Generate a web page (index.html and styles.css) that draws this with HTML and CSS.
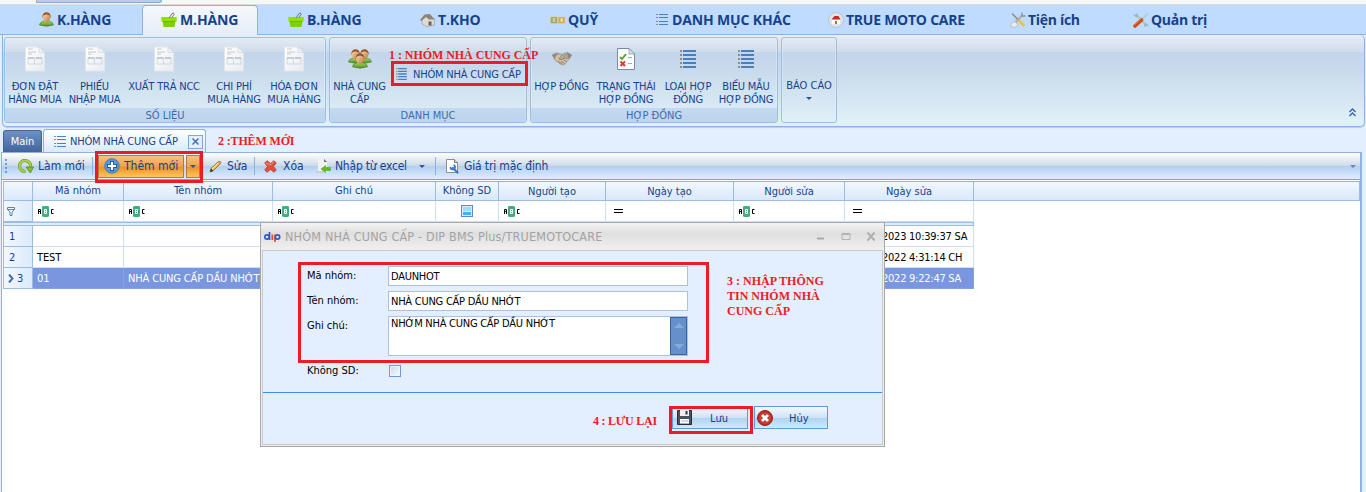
FILE: index.html
```
<!DOCTYPE html>
<html lang="vi">
<head>
<meta charset="utf-8">
<title>DIP BMS Plus/TRUEMOTOCARE</title>
<link rel="stylesheet" href="styles.css">
</head>
<body>
<svg class="defs" aria-hidden="true">
  <defs>
    <linearGradient id="gGreen" x1="0" y1="0" x2="0" y2="1"><stop offset="0" stop-color="#a5d860"/><stop offset="1" stop-color="#4d8f24"/></linearGradient>
    <linearGradient id="gHead" x1="0" y1="0" x2="1" y2="1"><stop offset="0" stop-color="#fbe0b8"/><stop offset="1" stop-color="#b9743a"/></linearGradient>
    <linearGradient id="gPage" x1="0" y1="0" x2="1" y2="1"><stop offset="0" stop-color="#ffffff"/><stop offset="1" stop-color="#e8ebef"/></linearGradient>
    <radialGradient id="gRed"><stop offset="0" stop-color="#ef7a66"/><stop offset="1" stop-color="#b82418"/></radialGradient>
    <radialGradient id="gBlue"><stop offset="0" stop-color="#7fb4ea"/><stop offset="1" stop-color="#4f8bcd"/></radialGradient>
    <symbol id="person" viewBox="0 0 15 15"><path d="M0.5 13C0.5 10.500 3 9.800 5.500 9H9.500C12 9.800 14.500 10.500 14.500 13Q7.500 15.500 .5 13Z" fill="url(#gGreen)" stroke="#4b8428" stroke-width=".6"/><path d="M3.500 4.500Q3.500 .5 7.500 .5T11.500 4.500Q10.500 10.500 7.500 11Q4.500 10.500 3.500 4.500Z" fill="url(#gHead)"/><path d="M3.500 6.500V3.500Q4.500 .2 7.500 .2T11.500 3.500V6.500L10.700 3.500Q9 2.500 7.500 2.500T4.300 3.500Z" fill="#96582a"/></symbol>
    <symbol id="people" viewBox="0 0 24 21"><use href="#person" x="0" y="0" width="15" height="16"/><use href="#person" x="9" y="0" width="15" height="16"/><use href="#person" x="4" y="4" width="16" height="17"/></symbol>
    <symbol id="basket" viewBox="0 0 16 16"><path d="M.3 5H15.700V9.500H.3Z" fill="#93e000"/><path d="M1.500 9H14.500L13.500 15H2.500Z" fill="#7fd000"/><path d="M2 9.500H14" stroke="#5fae00" stroke-width=".7"/><path d="M8 6 11 1.500Q13 0 13 2.500L11 5.500" fill="none" stroke="#6f7780" stroke-width="1"/></symbol>
    <symbol id="house" viewBox="0 0 16 14"><path d="M2 6 7 2 14.500 5.500V12L7 13.500 2 11Z" fill="#dedbd3" stroke="#8b8781" stroke-width=".5"/><path d="M0 7 4.500 1.500 10 1 14.500 6.500 9 6.500 6 4 1.500 8Z" fill="#8d857b"/><path d="M8.500 8.500H11.500V12.500H8.500Z" fill="#6b6256"/></symbol>
    <symbol id="money" viewBox="0 0 16 12"><path d="M0 2.500Q4 1.500 8 2.500T16 2V9.500Q12 10.500 8 10T0 10Z" fill="#d9d3a8"/><path d="M.8 3.200h6.400v6H.8Z" fill="#9fa872"/><path d="M2.800 4.200h2.400v3.800H2.800Z" fill="#d3cf9c"/><path d="M8.500 3.200h6v6h-6Z" fill="#cfa65c"/><path d="M10.500 4.200h2.200v3.800h-2.200Z" fill="#f0dda8"/></symbol>
    <symbol id="list" viewBox="0 0 12 11"><path d="M3 .5h9M3 3.500h9M3 7.500h9M3 10.500h9" stroke="#4a81bd" stroke-width="1"/><path d="M0 .5h2M0 3.500h2M0 7.500h2M0 10.500h2" stroke="#8c8c8c" stroke-width="1"/></symbol>
    <symbol id="biglist" viewBox="0 0 16 18"><path d="M3 1h13M3 5h13M3 9h13M3 13h13M3 17h13" stroke="#4a81bd" stroke-width="2"/><path d="M0 1h2M0 5h2M0 9h2M0 13h2M0 17h2" stroke="#8c8c8c" stroke-width="2"/></symbol>
    <symbol id="home" viewBox="0 0 16 16"><circle cx="8" cy="8" r="7.500" fill="#dfe4e8" stroke="#b3bcc4" stroke-width=".8"/><path d="M4 7.500h8v4.500H4Z" fill="#fff"/><path d="M3.500 7.500 6.500 4H10.500L12.500 7.500Z" fill="#cb2a20"/><path d="M7 9h2V12H7Z" fill="#b4695a"/></symbol>
    <symbol id="tools" viewBox="0 0 16 16"><path d="M6 6 14.500 14" stroke="#edc448" stroke-width="2.800"/><path d="M2 1.500 8 7.500" stroke="#848c92" stroke-width="1.500"/><path d="M12.500 3 5 11" stroke="#a9b1b7" stroke-width="2.200"/><path d="M1 11.500 5 9.500 8 13 4.500 15.500 1 14.500Z" fill="#eceef0" stroke="#a6adb4" stroke-width=".7"/><path d="M12 .5V4H15.500" fill="none" stroke="#8b949b" stroke-width="1.400"/></symbol>
    <symbol id="driver" viewBox="0 0 16 16"><path d="M4 3.500 13 13" stroke="#a6c8c9" stroke-width="2"/><path d="M1 2.500 3.500 4.500 4.500 1.500M11.500 14.500 13 12l2 2" fill="none" stroke="#8fb8b5" stroke-width="1.600"/><path d="M8 8 15 1.500" stroke="#b3cfc9" stroke-width="1.800"/><path d="M2 14 8.500 8" stroke="#d04c12" stroke-width="3.600" stroke-linecap="round"/><path d="M1.500 13 8 7" stroke="#ed8b46" stroke-width=".8"/></symbol>
    <symbol id="doc" viewBox="0 0 20 25"><path d="M.5.5H14L19.500 6V24.500H.5Z" fill="url(#gPage)" stroke="#e2e6ea"/><path d="M14 .5V6H19.500Z" fill="#f1f3f5" stroke="#cfd4da" stroke-width=".7"/><path d="M3 2.500h5M3 5.500h8M3 7.500h4" stroke="#c4c9cf"/><path d="M3 11.500h14v6H3ZM9.500 11.500v6" fill="none" stroke="#ccd5df" stroke-width=".9"/><path d="M3 11.500h6M11 11.500h6" stroke="#a3b2c2"/></symbol>
    <symbol id="hands" viewBox="0 0 20 16"><path d="M0 4 5 1.500 10 3 15 1 20 4 17 9 12 14.500 8 13.500 2 8.500Z" fill="#aaa195"/><path d="M3 5 8 3.500 11 5 8 8 12 7 17 9.500 14 12 12 13.500 8 12.500 3 8Z" fill="#d3bfa5"/><path d="M10 4 7 8 10 8.500 13 7M12 9l3 2M9 10l4 3M6 10l4 3" fill="none" stroke="#7d7163" stroke-width=".8"/><path d="M0 4 5 1.500 3 7.500ZM20 4 15 1l2 7Z" fill="#8b8680"/></symbol>
    <symbol id="check" viewBox="0 0 18 22"><path d="M.5.5H12L17.500 6V21.500H.5Z" fill="#fdfeff" stroke="#788ca5"/><path d="M12 .5V6H17.500Z" fill="#dce5ee" stroke="#788ca5" stroke-width=".7"/><path d="M3 9 5 11 9 6" fill="none" stroke="#62a729" stroke-width="2"/><path d="M3.500 13.500 8 18M8 13.500 3.500 18" stroke="#cc4238" stroke-width="2"/><path d="M11 9.500h4M11 15.500h4" stroke="#9ab0c8"/></symbol>
    <symbol id="refresh" viewBox="0 0 16 15"><path d="M12.500 8A5.500 5.500 0 1 0 7.500 12.500" fill="none" stroke="#67952a" stroke-width="3.200"/><path d="M12.500 8A5.500 5.500 0 1 0 7.500 12.500" fill="none" stroke="#a9d44d" stroke-width="2"/><path d="M8 8H15.700L12.300 14Z" fill="#86bd20" stroke="#558517" stroke-width=".7"/></symbol>
    <symbol id="add" viewBox="0 0 16 16"><circle cx="8" cy="8" r="7.300" fill="url(#gBlue)" stroke="#4c7fb9"/><path d="M8 3v10M3 8h10" stroke="#205795" stroke-width="4"/><path d="M8 4v8M4 8h8" stroke="#fff" stroke-width="2.200"/></symbol>
    <symbol id="pencil" viewBox="0 0 13 13"><path d="M1 12 2 8.500 9.500 1.500Q11.500 .5 12 3L4.500 10.500Z" fill="#efbd50" stroke="#87601d" stroke-width=".8"/><path d="M9.500 1.500Q11.500 .5 12 3L11 4 8.500 2.500Z" fill="#d98f7c"/><path d="M1 12 2 8.500 4.500 11Z" fill="#3d3b35"/><path d="M3 9 9 3" stroke="#fff0ac"/></symbol>
    <symbol id="cross" viewBox="0 0 13 13"><path d="M.7 3 3 .7 6.500 3.500 10 .7 12.300 3 9.500 6.500 12.300 10 10 12.300 6.500 9.500 3 12.300.7 10 3.500 6.500Z" fill="#e04f3e" stroke="#b23e36" stroke-width=".8"/><path d="M2 3 6 5 10 2" fill="none" stroke="#f49a88"/></symbol>
    <symbol id="excel" viewBox="0 0 16 16"><path d="M2 .5H8L11 4V14H2Z" fill="#eff1f2"/><path d="M8 1 11 4H8Z" fill="#6b7379"/><path d="M0 13h8v2H0Z" fill="#c8d0da"/><path d="M5 11 9.500 7.500V9.500H14.500V12.500H9.500V14.500Z" fill="#61bb24" stroke="#4ba01f" stroke-width=".5"/></symbol>
    <symbol id="wrench" viewBox="0 0 13 15"><path d="M.5.500H8.500L11.500 3.500V13.500H.5Z" fill="#fff" stroke="#8a8f94"/><path d="M8.500 .5V3.500H11.500" fill="#ddd" stroke="#777"/><path d="M7 9 11.500 13.500" stroke="#397ac0" stroke-width="2.300" stroke-linecap="round"/><path d="M4.500 8A2.300 2.300 0 1 0 7.500 6" fill="none" stroke="#397ac0" stroke-width="1.700"/></symbol>
    <symbol id="funnel" viewBox="0 0 8 9"><path d="M.5.500H7.500V2.500L5 5V8.500H3V5L.5 2.500ZM.5 2.500h7" fill="#f5f9ff" stroke="#5074a8" stroke-width=".9"/></symbol>
    <symbol id="floppy" viewBox="0 0 15 15"><path d="M.5.5H14.500V14.500H.5Z" fill="#4a5262" stroke="#252b37"/><path d="M3 0H12V6H3Z" fill="#eef1f4"/><path d="M8.500 1H10.500V4.500H8.500Z" fill="#303847"/><path d="M3 9H12V14H3Z" fill="#fff"/><path d="M3 13.500h9M4 11h7" stroke="#a9b4c0"/></symbol>
    <symbol id="cancel" viewBox="0 0 16 16"><circle cx="8" cy="8" r="7.500" fill="url(#gRed)" stroke="#92221b"/><path d="M5 5 11 11M11 5 5 11" stroke="#8e211a" stroke-width="4.300"/><path d="M5 5 11 11M11 5 5 11" stroke="#fff" stroke-width="3"/></symbol>
    <symbol id="dip" viewBox="0 0 17 10"><g fill="none" stroke-width="1.700"><circle cx="3" cy="5" r="2.200" stroke="#2d5bc4"/><path d="M5.500 0V8" stroke="#2d5bc4"/><path d="M8.300 2.500V8" stroke="#e34d2a"/><path d="M11 2.500V10" stroke="#e34d2a"/><circle cx="13.500" cy="5" r="2.200" stroke="#2d5bc4"/></g></symbol>
    <symbol id="collapse" viewBox="0 0 7 9"><path d="M.5 4 3.500 1 6.500 4M.5 8 3.500 5 6.500 8" fill="none" stroke="#2c63ae" stroke-width="1.300"/></symbol>
    <symbol id="abc" viewBox="0 0 16 11"><path d="M6 0H9Q11 0 11 1V10Q11 11 9 11H6Q4 11 4 10V1Q4 0 6 0Z" fill="#42ab80"/><g fill="none" stroke-width="1"><path d="M.5 8V3.500H2.500V8M1 5.500H2M15.500 3.500H13.500V7.500H15.500" stroke="#000"/><path d="M6.500 3.500H8.500V7.500H6.500ZM6.500 5.500H8.500" stroke="#fff"/></g></symbol>
  </defs>
</svg>

<div class="titlestrip"><div class="quickbar"></div></div>

<nav class="tabs">
  <div class="tab tab-kh"><svg width="15" height="15"><use href="#person"/></svg><span>K.HÀNG</span></div>
  <div class="tab tab-mh active"><svg width="16" height="16"><use href="#basket"/></svg><span>M.HÀNG</span></div>
  <div class="tab tab-bh"><svg width="16" height="16"><use href="#basket"/></svg><span>B.HÀNG</span></div>
  <div class="tab tab-kho"><svg width="16" height="14"><use href="#house"/></svg><span>T.KHO</span></div>
  <div class="tab tab-quy"><svg width="16" height="12"><use href="#money"/></svg><span>QUỸ</span></div>
  <div class="tab tab-dm"><svg width="12" height="11"><use href="#list"/></svg><span>DANH MỤC KHÁC</span></div>
  <div class="tab tab-moto"><svg width="16" height="16"><use href="#home"/></svg><span>TRUE MOTO CARE</span></div>
  <div class="tab tab-ti"><svg width="16" height="16"><use href="#tools"/></svg><span>Tiện ích</span></div>
  <div class="tab tab-qt"><svg width="16" height="16"><use href="#driver"/></svg><span>Quản trị</span></div>
</nav>

<section class="ribbon">
  <div class="group g-data">
    <div class="items">
      <div class="item w60"><svg width="20" height="25"><use href="#doc"/></svg><span>ĐƠN ĐẶT<br>HÀNG MUA</span></div>
      <div class="item w59"><svg width="20" height="25"><use href="#doc"/></svg><span>PHIẾU<br>NHẬP MUA</span></div>
      <div class="item w80"><svg width="20" height="25"><use href="#doc"/></svg><span>XUẤT TRẢ NCC</span></div>
      <div class="item w60"><svg width="20" height="25"><use href="#doc"/></svg><span>CHI PHÍ<br>MUA HÀNG</span></div>
      <div class="item w60"><svg width="20" height="25"><use href="#doc"/></svg><span>HÓA ĐƠN<br>MUA HÀNG</span></div>
    </div>
    <div class="caption">SỐ LIỆU</div>
  </div>
  <div class="group g-list">
    <div class="items">
      <div class="item w59"><svg width="24" height="21"><use href="#people"/></svg><span>NHÀ CUNG<br>CẤP</span></div>
      <div class="small-item"><svg width="11" height="12"><use href="#biglist"/></svg><span>NHÓM NHÀ CUNG CẤP</span></div>
    </div>
    <div class="caption">DANH MỤC</div>
  </div>
  <div class="group g-contract">
    <div class="items">
      <div class="item w61"><svg width="20" height="16"><use href="#hands"/></svg><span>HỢP ĐỒNG</span></div>
      <div class="item w68"><svg width="18" height="22"><use href="#check"/></svg><span>TRẠNG THÁI<br>HỢP ĐỒNG</span></div>
      <div class="item w56"><svg width="16" height="18"><use href="#biglist"/></svg><span>LOẠI HỢP<br>ĐỒNG</span></div>
      <div class="item w60"><svg width="16" height="18"><use href="#biglist"/></svg><span>BIỂU MẪU<br>HỢP ĐỒNG</span></div>
    </div>
    <div class="caption">HỢP ĐỒNG</div>
  </div>
  <div class="group g-report"><span>BÁO CÁO</span><i class="arrow"></i></div>
  <svg class="collapse" width="7" height="9"><use href="#collapse"/></svg>
</section>

<div class="doctabs">
  <div class="doctab-main">Main</div>
  <div class="doctab"><svg width="12" height="11"><use href="#list"/></svg><span>NHÓM NHÀ CUNG CẤP</span><b class="close"><svg width="7" height="7" viewBox="0 0 7 7"><path d="M.5.5 6.500 6.500M6.500.5.5 6.500" stroke="#3a64a4" stroke-width="1.300"/></svg></b></div>
</div>

<main class="workspace">
  <div class="toolbar">
    <i class="grip"></i>
    <div class="tool tl-refresh"><svg width="16" height="15"><use href="#refresh"/></svg><span>Làm mới</span></div>
    <i class="sep"></i>
    <div class="tool tl-add"><svg width="16" height="16"><use href="#add"/></svg><span>Thêm mới</span></div>
    <div class="tl-drop"><i class="arrow"></i></div>
    <div class="tool tl-edit"><svg width="13" height="13"><use href="#pencil"/></svg><span>Sửa</span></div>
    <i class="sep"></i>
    <div class="tool tl-del"><svg width="13" height="13"><use href="#cross"/></svg><span>Xóa</span></div>
    <div class="tool tl-excel"><svg width="16" height="16"><use href="#excel"/></svg><span>Nhập từ excel</span><i class="arrow"></i></div>
    <i class="sep"></i>
    <div class="tool tl-def"><svg width="13" height="15"><use href="#wrench"/></svg><span>Giá trị mặc định</span></div>
    <i class="arrow more"></i>
  </div>

  <div class="grid">
    <div class="row head"><div></div><div>Mã nhóm</div><div>Tên nhóm</div><div>Ghi chú</div><div>Không SD</div><div class="low">Người tạo</div><div class="low">Ngày tạo</div><div class="low">Người sửa</div><div class="low">Ngày sửa</div><div></div></div>
    <div class="row filter">
      <div class="ind"><svg width="8" height="9"><use href="#funnel"/></svg></div>
      <div><svg width="16" height="11"><use href="#abc"/></svg></div>
      <div><svg width="16" height="11"><use href="#abc"/></svg></div>
      <div><svg width="16" height="11"><use href="#abc"/></svg></div>
      <div class="mid"><i class="tri"></i></div>
      <div><svg width="16" height="11"><use href="#abc"/></svg></div>
      <div><i class="eq"></i></div>
      <div><svg width="16" height="11"><use href="#abc"/></svg></div>
      <div><i class="eq"></i></div>
    </div>
    <div class="band"></div>
    <div class="row"><div class="ind">1</div><div></div><div></div><div></div><div></div><div></div><div></div><div></div><div class="date">2023 10:39:37 SA</div></div>
    <div class="row"><div class="ind">2</div><div>TEST</div><div></div><div></div><div></div><div></div><div></div><div></div><div class="date">2022 4:31:14 CH</div></div>
    <div class="row sel"><div class="ind cur"><svg width="6" height="9" viewBox="0 0 6 9"><path d="M1 .5 4.500 4.500 1 8.500" fill="none" stroke="#456fae" stroke-width="2"/></svg>3</div><div>01</div><div>NHÀ CUNG CẤP DẦU NHỚT</div><div></div><div></div><div></div><div></div><div></div><div class="date">2022 9:22:47 SA</div></div>
  </div>
</main>

<section class="dialog">
  <header><svg width="17" height="10"><use href="#dip"/></svg><span>NHÓM NHÀ CUNG CẤP - DIP BMS Plus/TRUEMOTOCARE</span>
    <svg class="winbtns" width="60" height="12" viewBox="0 0 60 12"><path d="M1 7.500h7" stroke="#aaa" stroke-width="2"/><path d="M26 2.500h8v6h-8ZM26 3.500h8" fill="none" stroke="#b3b3b3"/><path d="M51.500 1.500 58.500 9.500M58.500 1.500 51.500 9.500" stroke="#b0b0b0" stroke-width="2"/></svg>
  </header>
  <div class="dialog-body">
    <div class="form">
      <label>Mã nhóm:</label><div class="field">DAUNHOT</div>
      <label>Tên nhóm:</label><div class="field">NHÀ CUNG CẤP DẦU NHỚT</div>
      <label>Ghi chú:</label><div class="field memo"><span>NHỚM NHÀ CUNG CẤP DẦU NHỚT</span><div class="scroll"><i class="up"></i><i class="down"></i></div></div>
      <label>Không SD:</label><div class="checkbox"></div>
    </div>
    <footer>
      <div class="btn btn-save"><svg width="15" height="15"><use href="#floppy"/></svg><span>Lưu</span></div>
      <div class="btn btn-cancel"><svg width="16" height="16"><use href="#cancel"/></svg><span>Hủy</span></div>
    </footer>
  </div>
</section>

<div class="mark m1"></div><div class="note n1">1 : NHÓM NHÀ CUNG CẤP</div>
<div class="mark m2"></div><div class="note n2">2 :THÊM MỚI</div>
<div class="mark m3"></div><div class="note n3">3 : NHẬP THÔNG<br>TIN NHÓM NHÀ<br>CUNG CẤP</div>
<div class="mark m4"></div><div class="note n4">4 : LƯU LẠI</div>
</body>
</html>
```
FILE: styles.css
```
* { box-sizing: border-box; }
body {
  margin: 0;
  width: 1366px;
  height: 492px;
  overflow: hidden;
  position: relative;
  background: #e3efff;
  color: #15428b;
  font: 11px/13px "DejaVu Sans Condensed", "DejaVu Sans", sans-serif;
  font-stretch: condensed;
  white-space: nowrap;
}
svg { display: block; flex: none; }
.defs { position: absolute; width: 0; height: 0; }

.titlestrip { height: 5px; background: #f7f7f7; border-bottom: 1px solid #dcdcdc; }
.quickbar { width: 126px; height: 3px; margin-left: 36px; background: #b9cde6; border: 1px solid #8fa9cc; border-top: 0; border-radius: 0 0 8px 0; }

/* Ribbon tabs */
.tabs { height: 30px; display: flex; background: #bfdbff; border-bottom: 1px solid #8db2e3; font: bold 14px/18px "Open Sans", "Noto Sans", sans-serif; letter-spacing: -.15px; }
.tab { display: flex; align-items: center; gap: 3px; height: 30px; padding-bottom: 1px; }
.tab-kh { width: 142px; padding-left: 39px; }
.tab-mh { width: 116px; padding-left: 18px; }
.tab-bh { width: 162px; padding-left: 30px; }
.tab-kho { width: 130px; gap: 2px; }
.tab-quy { width: 106px; gap: 2px; }
.tab-dm { width: 172px; gap: 4px; }
.tab-moto { width: 182px; gap: 2px; letter-spacing: -.25px; }
.tab-ti { width: 123px; gap: 2px; letter-spacing: -.3px; }
.tab-qt { gap: 2px; letter-spacing: -.3px; }
.tab.active { background: linear-gradient(#f4f8fd, #e7eef7); border: 1px solid #8db2e3; border-bottom: 0; border-radius: 4px 4px 0 0; padding-bottom: 2px; }

/* Ribbon */
.ribbon {
  height: 92px; margin: 0 1px 0 2px; padding: 2px 2px 0 1px; display: flex; gap: 3px;
  border: 1px solid #8db2e3; border-top: 0; border-radius: 0 5px 5px 5px;
  background: linear-gradient(#e7eef6 0, #cfdcea 17px, #c3d5eb 17px, #c9daec 36px, #dff0f8 86px, #e0f1f8);
  box-shadow: 0 1px 1px #b6cbe6;
}
.group { height: 86px; border: 1px solid #9ebfdd; border-radius: 3px; box-shadow: inset 0 0 0 1px #e4eef777; }
.g-data { width: 322px; }
.g-list { width: 198px; }
.g-contract { width: 248px; }
.g-report { width: 56px; display: flex; flex-direction: column; align-items: center; padding-top: 41px; gap: 5px; }
.items { height: 70px; display: flex; }
.item { display: flex; flex-direction: column; align-items: center; text-align: center; letter-spacing: -.2px; }
.item svg { height: 42px; }
.w56 { width: 56px; } .w59 { width: 59px; } .w60 { width: 60px; } .w61 { width: 61px; } .w68 { width: 68px; } .w80 { width: 80px; }
.small-item { display: flex; align-items: center; height: 16px; margin: 28px 0 0 7px; gap: 6px; letter-spacing: -.2px; }
.caption { height: 14px; background: linear-gradient(#c2d9f1, #bcd4ec); text-align: center; color: #3e6aaa; line-height: 15px; }
.arrow { width: 0; height: 0; border: 3px solid transparent; border-top-color: #2c549b; border-bottom: 0; }
.collapse { margin: 71px 6px 0 auto; }

/* Document tabs */
.doctabs { height: 25px; display: flex; align-items: flex-end; padding-left: 3px; }
.doctab-main { width: 39px; height: 22px; background: linear-gradient(#6f90c5, #42659f); border: 1px solid #3f659f; border-bottom: 0; border-radius: 3px 3px 0 0; color: #fff; text-align: center; line-height: 21px; }
.doctab { width: 163px; height: 23px; margin-left: 1px; padding-left: 10px; display: flex; align-items: center; gap: 4px; background: linear-gradient(#fff, #dce9fb); border: 1px solid #8db2e3; border-bottom: 0; border-radius: 3px 3px 0 0; letter-spacing: -.2px; }
.close { width: 15px; height: 14px; margin: 1px 2px 0 auto; display: flex; align-items: center; justify-content: center; border: 1px solid #7fa7dc; background: #e4effd; }

/* Toolbar */
.workspace { height: 340px; width: 1361px; margin-left: 1px; background: #fff; border: solid #8db2e3; border-width: 0 2px 0 1px; }
.toolbar { height: 28px; display: flex; align-items: center; border-top: 1px solid #8db2e3; border-bottom: 1px solid #7ba3d8; background: linear-gradient(#fff 0, #cdd9e8 13px, #b1cff0 13px, #deedff); font-size: 12px; }
.tool { display: flex; align-items: center; gap: 4px; }
.grip { width: 2px; height: 15px; margin-left: 3px; background: repeating-linear-gradient(#6f9bd1 0 2px, transparent 2px 4px); }
.sep { width: 1px; height: 18px; background: #8fb1dd; }
.tl-refresh { margin-left: 11px; width: 74px; }
.tl-add { margin-left: 5px; width: 86px; height: 23px; padding-left: 5px; background: linear-gradient(#f7c181, #eda04e 50%, #f08c1e 50%, #ffc65e); border: 1px solid #b8793b; }
.tl-drop { margin-left: 2px; width: 14px; height: 23px; display: flex; align-items: center; justify-content: center; background: linear-gradient(#f7c181, #eda04e 50%, #f08c1e 50%, #ffc65e); border: 1px solid #b8793b; }
.tl-edit { margin-left: 9px; width: 45px; gap: 5px; }
.tl-del { margin-left: 9px; width: 52px; gap: 6px; }
.tl-excel { width: 119px; gap: 3px; letter-spacing: -.2px; }
.tl-excel .arrow { margin-left: 9px; }
.tl-def { margin-left: 10px; gap: 5px; letter-spacing: -.15px; }
.more { margin: 0 4px 0 auto; opacity: .6; }

/* Data grid */
.grid { margin-top: 1px; margin-left: 1px; width: 1357px; }
.row { display: grid; grid-template-columns: 30px 91px 149px 163px 63px 107px 128px 111px 129px 1fr; height: 21px; color: #000; line-height: 21px; letter-spacing: -.15px; }
.row > div { border-right: 1px solid #cddff5; border-bottom: 1px solid #cddff5; padding-left: 4px; overflow: hidden; }
.row .ind { background: linear-gradient(90deg, #f2f8ff, #dceafc); border-color: #9ebbe0; border-left: 1px solid #9ebbe0; color: #15428b; padding-left: 5px; }
.head { height: 20px; color: #15428b; line-height: 17px; text-align: center; letter-spacing: 0; border-top: 1px solid #8db2e3; border-left: 1px solid #9ebbe0; grid-template-columns: 29px 91px 149px 163px 63px 107px 128px 111px 129px 1fr; }
.row.head > div { background: linear-gradient(#f2f8ff, #d9e8fb); border-color: #9ebbe0; padding: 0; }
.head .low { line-height: 19px; }
.row.filter > div { display: flex; align-items: center; padding-left: 5px; }
.row.filter > .ind { padding-left: 3px; }
.row.filter > .mid { padding: 0; justify-content: center; }
.tri { width: 12px; height: 12px; border: 1px solid #5c8dcb; box-shadow: inset 0 0 0 1px #d9ebfc; background: linear-gradient(#9cddff 45%, #d5efff 45% 55%, #44b3f0 55%); }
.eq { width: 9px; height: 4px; margin-left: 3px; border: solid #000; border-width: 1px 0; }
.band { width: 971px; height: 4px; background: #dfecfc; border: 1px solid #9ebbe0; }
.row.sel > div:not(.ind) { background: #7996df; border-color: #86a2e5; color: #fff; }
.row .cur { display: flex; align-items: center; gap: 3px; padding-left: 4px; }
.row > .date { padding-left: 37px; letter-spacing: -.25px; }

/* Dialog */
.dialog { position: absolute; left: 260px; top: 222px; width: 625px; height: 225px; border: 1px solid #a8a8a8; background: #ededed; padding: 0 1px 1px; }
.dialog header { height: 27px; margin: 0 -1px; padding: 0 8px 0 3px; display: flex; align-items: center; gap: 4px; font-size: 12.500px; letter-spacing: .18px; color: #a3a3a3; background: linear-gradient(#f3f3f3, #dfdfdf 40%, #f0f0f0); }
.winbtns { margin-left: auto; }
.dialog-body { height: 195px; background: #e3efff; border: 1px solid #cacaca; }
.form { height: 142px; padding: 15px 0 0 44px; display: grid; grid-template-columns: 81px 300px; grid-template-rows: 20px 20px 40px 13px; row-gap: 5px; border-bottom: 1px solid #3b8de8; color: #000; }
.form label { line-height: 19px; }
.field { background: #fff; border: 1px solid #a9c2e3; padding-left: 2px; line-height: 19px; letter-spacing: -.25px; }
.memo { display: flex; justify-content: space-between; line-height: 14px; }
.scroll { width: 17px; height: 38px; background: #6590ca; border: 1px solid #38649f; display: flex; flex-direction: column; align-items: center; justify-content: space-between; padding: 5px 0; }
.up, .down { border: 5px solid transparent; border-top: 0; border-bottom-color: #87abd9; }
.down { border-top: 5px solid #87abd9; border-bottom: 0; }
.checkbox { width: 12px; height: 12px; margin: 4px 0 0 1px; border: 1px solid #6f9ad3; background: linear-gradient(135deg, #bfd6f0, #fff); box-shadow: inset 0 0 0 1px #eef5ff; }
.dialog footer { padding: 13px 0 0 409px; display: flex; gap: 6px; }
.btn { width: 74px; height: 23px; display: flex; align-items: center; border: 1px solid #5e9ad6; background: linear-gradient(#f4f9ff, #cfe3f6 50%, #add2f0 50%, #cceafd); padding-left: 4px; line-height: 15px; }
.btn span { padding-top: 2px; }
.btn-save { width: 76px; gap: 18px; }
.btn-cancel { padding-left: 2px; gap: 16px; }

/* Step annotations */
.mark { position: absolute; border: 3px solid #ed1c24; }
.m1 { left: 391px; top: 61px; width: 137px; height: 25px; }
.m2 { left: 95px; top: 151px; width: 108px; height: 32px; }
.m3 { left: 298px; top: 262px; width: 411px; height: 101px; }
.m4 { left: 669px; top: 406px; width: 84px; height: 28px; }
.note { position: absolute; color: #ed1c24; font: bold 12px/15px "Liberation Serif", serif; }
.n1 { left: 389px; top: 48px; letter-spacing: -.05px; }
.n2 { left: 218px; top: 134px; letter-spacing: -.15px; }
.n3 { left: 727px; top: 274px; }
.n4 { left: 593px; top: 414px; letter-spacing: -.25px; }
```
